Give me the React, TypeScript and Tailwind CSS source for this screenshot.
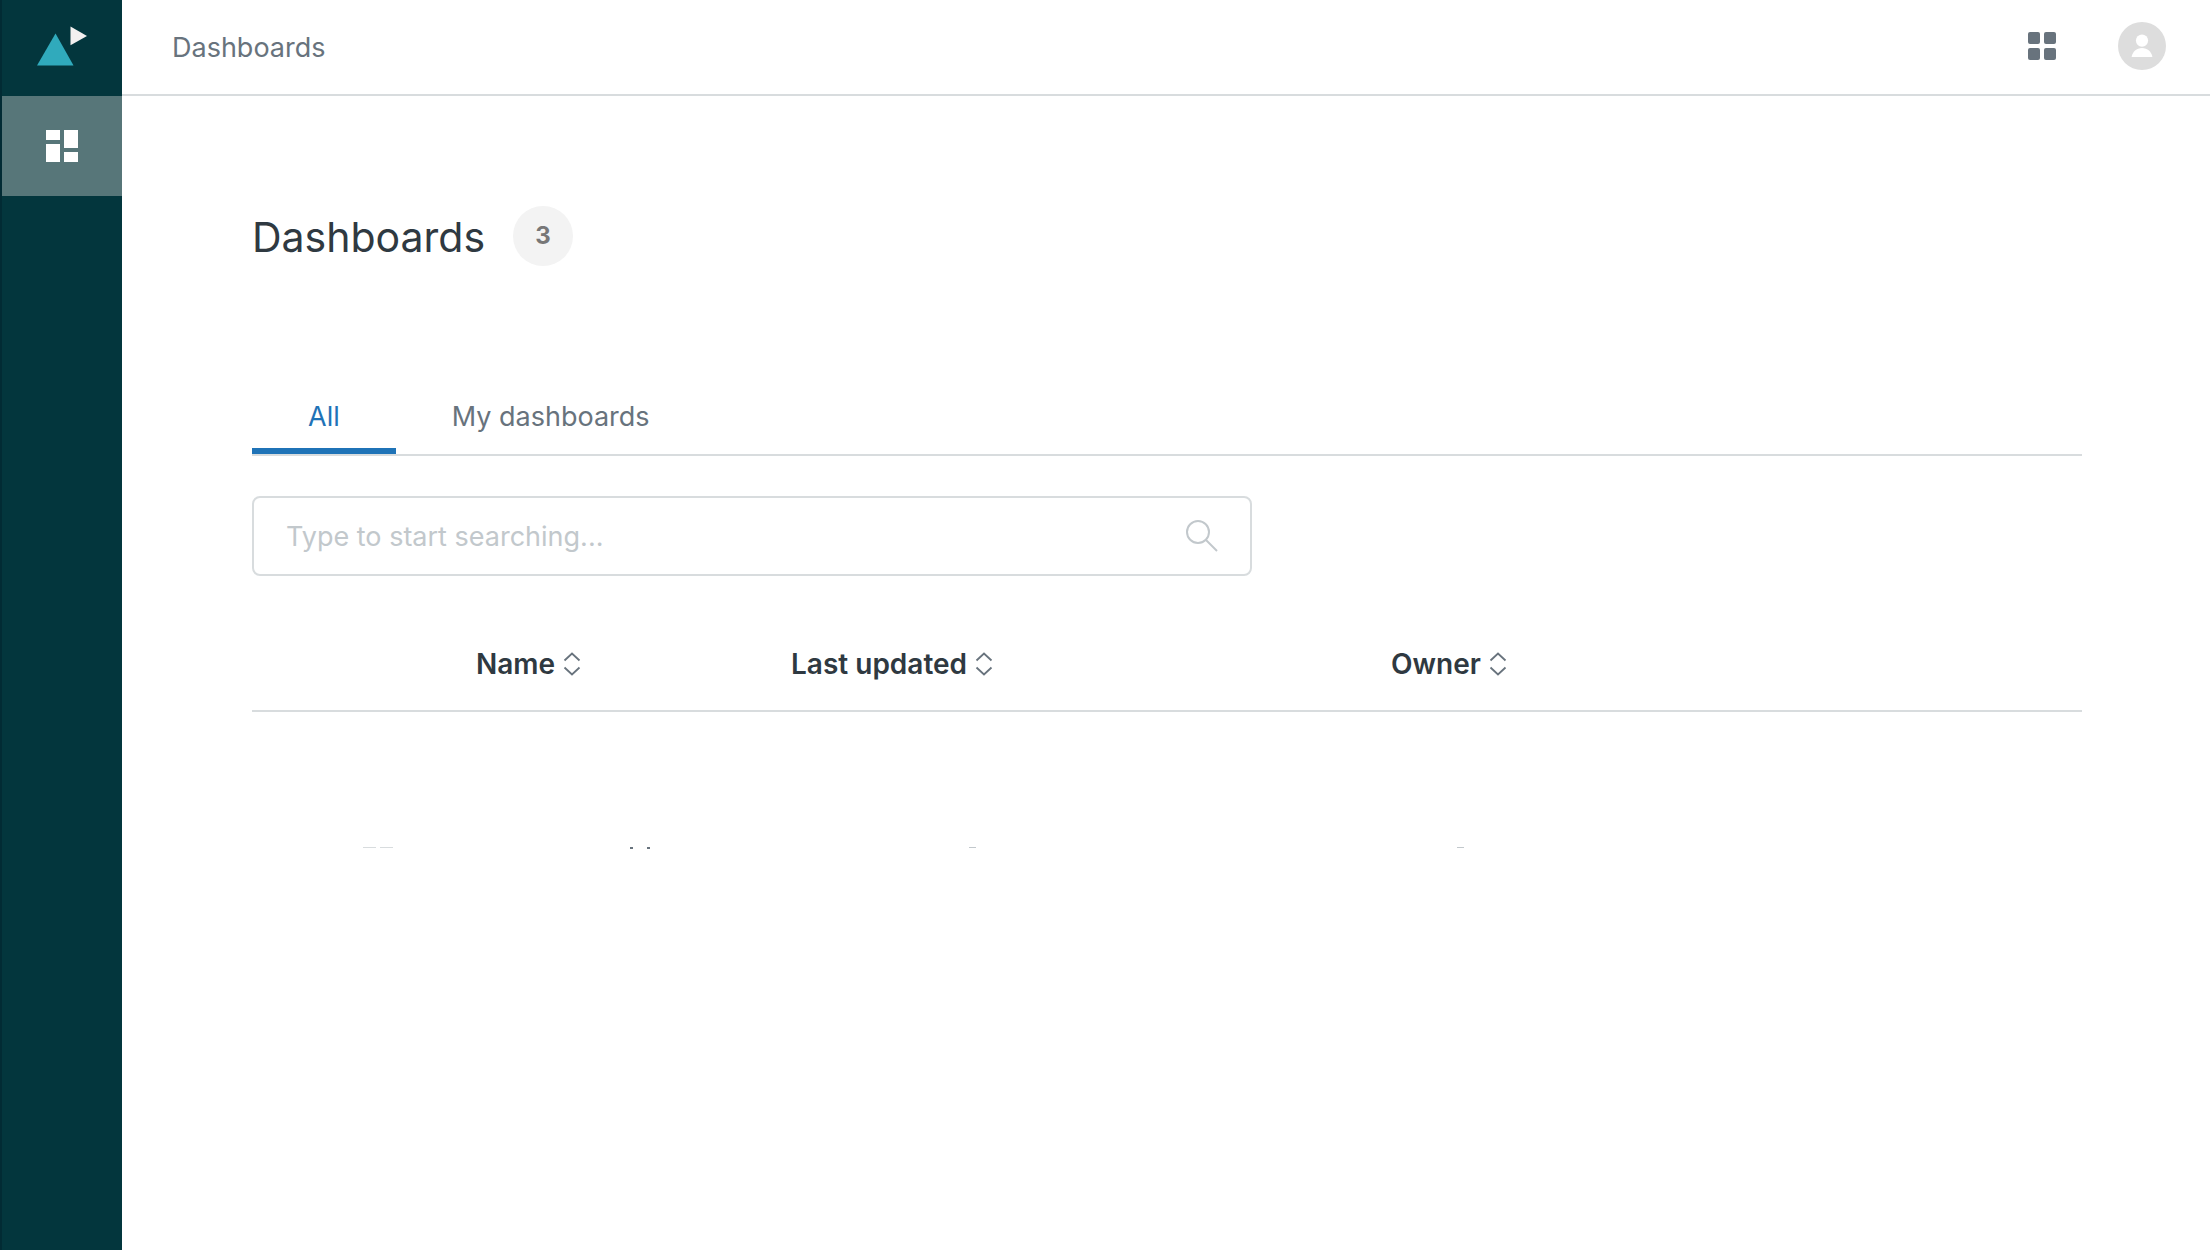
import { useState } from "react";

const tabs = ["All", "My dashboards"];

const columns = [
  { label: "Name", className: "w-[315px]" },
  { label: "Last updated", className: "w-[600px]" },
  { label: "Owner", className: "" },
];

const Logo = () => (
  <svg viewBox="0 0 122 96" className="w-full h-24" aria-hidden="true">
    <path d="M55.5 33.5 73.5 65.5H37z" fill="#30aabc" />
    <path d="M70.5 26.5 87 36 70.5 45.2z" fill="#f3f0f0" />
  </svg>
);

const SortIcon = () => (
  <svg width="18" height="24" viewBox="0 0 18 24" fill="none" stroke="#68737d" strokeWidth="1.8" aria-hidden="true">
    <path d="M1.500 8.500 9 1.500l7.500 7M1.500 15.500l7.500 7 7.500-7" />
  </svg>
);

const Sidebar = () => (
  <aside className="w-[122px] shrink-0 bg-[#03363d] border-l-2 border-[#022b34]">
    <a href="#home" aria-label="Home" className="block -ml-0.5">
      <Logo />
    </a>
    <nav>
      <a
        href="#dashboards"
        aria-label="Dashboards"
        className="flex items-center justify-center h-[100px] bg-[#577679]"
      >
        <svg width="32" height="32" viewBox="0 0 32 32" fill="#fff" aria-hidden="true">
          <path d="M0 0h14v10H0zM0 14h14v18H0zM18 0h14v18H18zM18 22h14v10H18z" />
        </svg>
      </a>
    </nav>
  </aside>
);

const Header = () => (
  <header className="flex items-center justify-between h-24 pl-[50px] pr-11 border-b-2 border-[#d8dcde]">
    <span className="pt-0.5 text-[27px] leading-9 text-[#68737d]">Dashboards</span>
    <div className="flex items-center gap-[62px] pb-0.5">
      <button type="button" aria-label="Products">
        <svg width="28" height="28" viewBox="0 0 28 28" fill="#68737d" aria-hidden="true">
          <rect width="12" height="12" rx="2" />
          <rect x="16" width="12" height="12" rx="2" />
          <rect y="16" width="12" height="12" rx="2" />
          <rect x="16" y="16" width="12" height="12" rx="2" />
        </svg>
      </button>
      <button type="button" aria-label="Profile">
        <svg width="48" height="48" viewBox="0 0 48 48" aria-hidden="true">
          <circle cx="24" cy="24" r="24" fill="#ddd" />
          <circle cx="24" cy="18.6" r="6.1" fill="#fff" />
          <path d="M13.6 35c.8-5.2 5-9 10.4-9s9.600 3.800 10.400 9z" fill="#fff" />
        </svg>
      </button>
    </div>
  </header>
);

const RowEdge = () => (
  <tr className="h-[138px] align-bottom">
    <td className="pl-[111px]">
      <svg width="32" height="2" className="block" fill="#d8dcde" aria-hidden="true">
        <path d="M0 0h13v1H0zM17 0h13v1H17z" />
      </svg>
    </td>
    <td className="pl-[154px]">
      <svg width="22" height="2" className="block" fill="#68737d" aria-hidden="true">
        <path d="M0 0h3v2H0zM17 0h3v2H17z" />
      </svg>
    </td>
    <td className="pl-[178px]">
      <svg width="8" height="2" className="block" fill="#c2c8cc" aria-hidden="true">
        <path d="M0 0h7v1H0z" />
      </svg>
    </td>
    <td className="pl-[66px]">
      <svg width="8" height="2" className="block" fill="#c2c8cc" aria-hidden="true">
        <path d="M0 0h7v1H0z" />
      </svg>
    </td>
  </tr>
);

const App = () => {
  const [activeTab, setActiveTab] = useState(tabs[0]);
  const [search, setSearch] = useState("");

  return (
    <div className="flex min-h-screen bg-white font-['Inter',sans-serif] text-[#2f3941]">
      <Sidebar />
      <div className="flex-1 min-w-0">
        <Header />
        <main className="pl-[130px] pr-32 pt-[110px]">
          <div className="flex items-center gap-7">
            <h1 className="pt-0.5 text-[41px] leading-[58px]">Dashboards</h1>
            <span className="flex items-center justify-center size-[60px] rounded-full bg-[#f3f3f3] text-2xl font-bold text-[#777]">
              3
            </span>
          </div>

          <div role="tablist" className="flex mt-[112px] border-b-2 border-[#d8dcde]">
            {tabs.map((tab) => (
              <button
                key={tab}
                type="button"
                role="tab"
                aria-selected={activeTab === tab}
                onClick={() => setActiveTab(tab)}
                className={
                  activeTab === tab
                    ? "h-[76px] px-14 pt-2 text-[27px] border-b-6 border-[#1f73b7] text-[#1f73b7]"
                    : "h-[76px] px-14 pt-2 text-[27px] border-b-6 border-transparent text-[#68737d]"
                }
              >
                {tab}
              </button>
            ))}
          </div>

          <label className="flex items-center mt-10 w-[1000px] h-20 px-8 border-2 border-[#d8dcde] rounded-lg">
            <input
              type="text"
              aria-label="Search dashboards"
              placeholder="Type to start searching..."
              value={search}
              onChange={(e) => setSearch(e.target.value)}
              className="flex-1 min-w-0 pt-0.5 text-[27px] leading-9 outline-none placeholder:text-[#c2c8cc]"
            />
            <svg width="32" height="32" viewBox="0 0 32 32" fill="none" stroke="#c2c8cc" strokeWidth="2" aria-hidden="true">
              <circle cx="12" cy="12" r="11" />
              <path d="m20 20 11 11" />
            </svg>
          </label>

          <table className="w-full mt-10 table-fixed border-collapse">
            <thead>
              <tr className="h-[95px] border-b-2 border-[#d8dcde]">
                <td className="w-[224px]" />
                {columns.map((column) => (
                  <th key={column.label} scope="col" className={column.className}>
                    <button type="button" className="flex items-center gap-2 pt-0.5 text-[28px] leading-9 font-semibold">
                      {column.label}
                      <SortIcon />
                    </button>
                  </th>
                ))}
              </tr>
            </thead>
            <tbody>
              <RowEdge />
            </tbody>
          </table>
        </main>
      </div>
    </div>
  );
};

export default App;
